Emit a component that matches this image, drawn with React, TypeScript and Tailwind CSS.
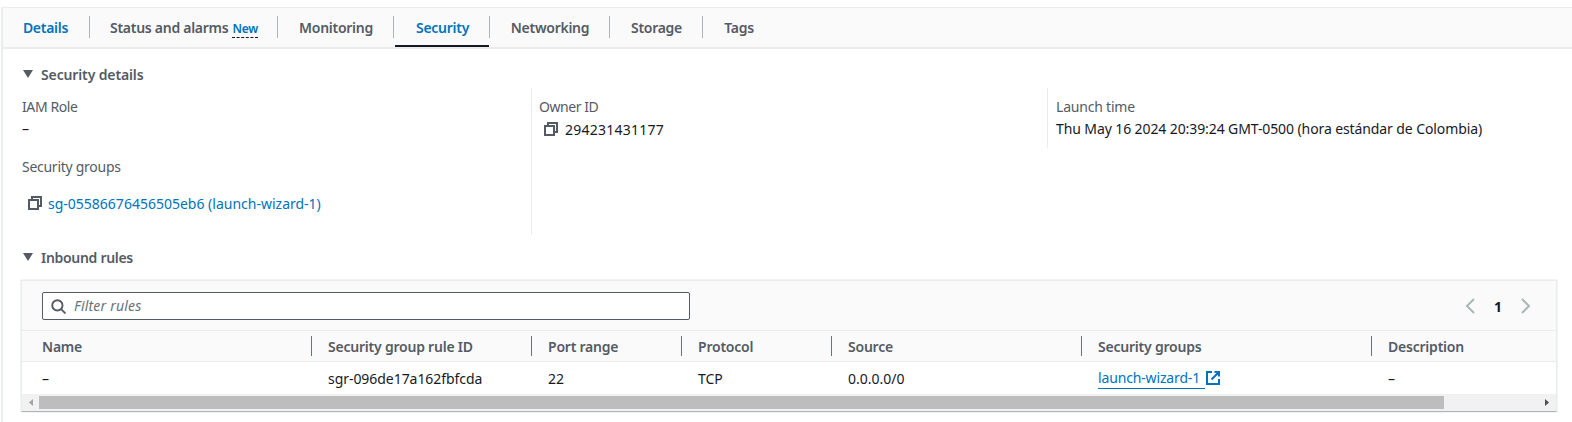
import React from "react";

const F = "font-['Noto_Sans','Open_Sans',sans-serif]";

function Copy() {
  return (
    <svg viewBox="0 0 14 14" className="w-[14px] h-[14px] shrink-0" fill="none" stroke="#545b64" strokeWidth="2">
      <rect x="1" y="4" width="9" height="9" />
      <path d="M4 4V1h9v9h-3" />
    </svg>
  );
}

function Caret() {
  return (
    <svg viewBox="0 0 10 8" className="w-[10px] h-[8px]" fill="#545b64">
      <path d="M0 0h10L5 8z" />
    </svg>
  );
}

function Tab({ label, active, last, blue, badge, w }: { label: string; active?: boolean; last?: boolean; blue?: boolean; badge?: boolean; w: string }) {
  return (
    <div className={"relative h-full flex items-center justify-center " + w}>
      <span className={"text-[14px] font-semibold tracking-[-0.27px] whitespace-nowrap " + (blue ? "text-[#0073bb]" : "text-[#545b64]")}>
        {label}
        {badge && <span className="ml-[4px] text-[12px] tracking-[-0.2px] text-[#0073bb] border-b border-dashed border-[#16191f]">New</span>}
      </span>
      {!last && <span className="absolute right-0 top-[8px] h-[22px] w-px bg-[#aab7b8]" />}
      {active && <span className="absolute left-[1px] right-[1px] bottom-0 h-[2px] bg-[#16191f]" />}
    </div>
  );
}

const cols = [
  { w: "w-[286px]", h: "Name", v: "–" },
  { w: "w-[220px]", h: "Security group rule ID", v: "sgr-096de17a162fbfcda" },
  { w: "w-[150px]", h: "Port range", v: "22" },
  { w: "w-[150px]", h: "Protocol", v: "TCP" },
  { w: "w-[250px]", h: "Source", v: "0.0.0.0/0" },
  { w: "w-[290px]", h: "Security groups", v: "link" },
  { w: "w-[168px]", h: "Description", v: "–" },
];

export default function App() {
  return (
    <div className={"w-[1572px] h-[422px] bg-white overflow-hidden text-[14px] text-[#16191f] " + F}>
      <div className="mt-[7px] ml-px h-[415px] border-l-2 border-t border-[#eaeded] flex flex-col">
        <div className="h-[39px] shrink-0 bg-[#fafafa] border-b-2 border-[#eaeded] box-content -mb-[2px]">
          <div className="flex h-[39px]">
            <Tab label="Details" blue w="w-[87px] pr-[2px]" />
            <Tab label="Status and alarms" badge w="w-[188px]" />
            <Tab label="Monitoring" w="w-[116px]" />
            <Tab label="Security" blue active w="w-[96px] pl-[1px]" />
            <Tab label="Networking" w="w-[120px]" />
            <Tab label="Storage" w="w-[93px]" />
            <Tab label="Tags" last w="w-[74px] pr-[2px]" />
          </div>
        </div>

        <div className="pl-[19px] pt-[17px] flex flex-col">
          <div className="flex items-center gap-[8px] h-[20px] pl-[1px]">
            <Caret />
            <span className="font-semibold tracking-[-0.13px] text-[#545b64]">Security details</span>
          </div>
          <div className="flex mt-[4px] h-[147px]">
            <div className="w-[509px] pt-[9px]">
              <div className="leading-[20px] tracking-[-0.4px] text-[#545b64]">IAM Role</div>
              <div className="leading-[22px] mt-[1px]">–</div>
              <div className="leading-[20px] tracking-[-0.27px] text-[#545b64] mt-[17px]">Security groups</div>
              <div className="flex items-center gap-[6px] mt-[16px] pl-[6px] h-[20px]">
                <Copy />
                <span className="text-[#0073bb]">sg-05586676456505eb6 (launch-wizard-1)</span>
              </div>
            </div>
            <div className="w-[516px] border-l border-[#eaeded] pl-[7px] pt-[9px]">
              <div className="leading-[20px] tracking-[-0.45px] text-[#545b64]">Owner ID</div>
              <div className="flex items-center gap-[7px] pl-[5px] mt-[1px] h-[22px]">
                <Copy />
                <span className="tracking-[0.25px]">294231431177</span>
              </div>
            </div>
            <div className="h-[60px] border-l border-[#eaeded] pl-[8px] pt-[9px]">
              <div className="leading-[20px] tracking-[-0.2px] text-[#545b64]">Launch time</div>
              <div className="leading-[22px] mt-[1px] tracking-[-0.1px]">Thu May 16 2024 20:39:24 GMT-0500 (hora estándar de Colombia)</div>
            </div>
          </div>

          <div className="flex items-center gap-[8px] h-[20px] pl-[1px] mt-[12px]">
            <Caret />
            <span className="font-semibold tracking-[-0.3px] text-[#545b64]">Inbound rules</span>
          </div>

          <div className="mt-[13px] w-[1536px] h-[132px] -ml-px border border-[#eaeded] border-b-[#aab7b8] shadow-[0_0_1px_rgba(0,28,36,0.3)] flex flex-col">
            <div className="h-[50px] bg-[#fafafa] border-b border-[#eaeded] flex items-start justify-between pl-[20px] pr-[25px] pt-[11px] shrink-0">
              <div className="w-[648px] h-[28px] border border-[#545b64] rounded-[2px] bg-white flex items-center pl-[8px] gap-[8px]">
                <svg viewBox="0 0 16 16" className="w-[15px] h-[15px]" fill="none" stroke="#545b64" strokeWidth="2">
                  <circle cx="6.800" cy="6.800" r="5.500" />
                  <path d="M11 11l4.500 4.500" />
                </svg>
                <span className="italic tracking-[0.2px] text-[#687078] leading-none">Filter rules</span>
              </div>
              <div className="flex items-center h-[28px] gap-[19px]">
                <svg viewBox="0 0 10 16" className="w-[10px] h-[16px]" fill="none" stroke="#aab7b8" strokeWidth="2"><path d="M9 1L2 8l7 7" /></svg>
                <span className="font-bold text-[#16191f]">1</span>
                <svg viewBox="0 0 10 16" className="w-[10px] h-[16px]" fill="none" stroke="#aab7b8" strokeWidth="2"><path d="M1 1l7 7-7 7" /></svg>
              </div>
            </div>
            <div className="flex h-[31px] bg-[#fafafa] border-b border-[#eaeded] shrink-0 pl-[20px]">
              {cols.map((c, i) => (
                <div key={c.h} className={"relative flex items-center shrink-0 font-semibold tracking-[-0.22px] text-[#545b64] " + c.w}>
                  <span>{c.h}</span>
                  {i < 6 && <span className="absolute right-[16px] top-[5px] h-[20px] w-px bg-[#687078]" />}
                </div>
              ))}
            </div>
            <div className="flex h-[32px] bg-white shrink-0 pl-[20px]">
              {cols.map((c) => (
                <div key={c.h} className={"flex items-center shrink-0 " + c.w}>
                  {c.v === "link" ? (
                    <span className="flex items-center gap-[4px] text-[#0073bb]">
                      <span className="border-b border-[#0073bb] pr-[5px] leading-[20px] tracking-[-0.15px]">launch-wizard-1</span>
                      <svg viewBox="0 0 14 14" className="w-[14px] h-[14px] -ml-[3px] mb-[1px]" fill="none" stroke="#0073bb" strokeWidth="2">
                        <path d="M6 1H1v12h12V8M8.500 1H13v4.500M13 1L5.500 8.500" />
                      </svg>
                    </span>
                  ) : (
                    <span className={c.v.startsWith("sgr") ? "tracking-[-0.05px]" : ""}>{c.v}</span>
                  )}
                </div>
              ))}
            </div>
            <div className="flex-1 bg-[#f1f1f1] relative">
              <svg viewBox="0 0 4 7" className="absolute left-[7px] top-[5px] w-[4px] h-[7px]" fill="#a3a3a3"><path d="M4 0v7L0 3.500z" /></svg>
              <div className="absolute left-[17px] top-[2px] h-[13px] w-[1405px] bg-[#bdbdbd]" />
              <svg viewBox="0 0 4 7" className="absolute right-[7px] top-[5px] w-[4px] h-[7px]" fill="#505050"><path d="M0 0v7l4-3.500z" /></svg>
            </div>
          </div>
        </div>
      </div>
    </div>
  );
}
